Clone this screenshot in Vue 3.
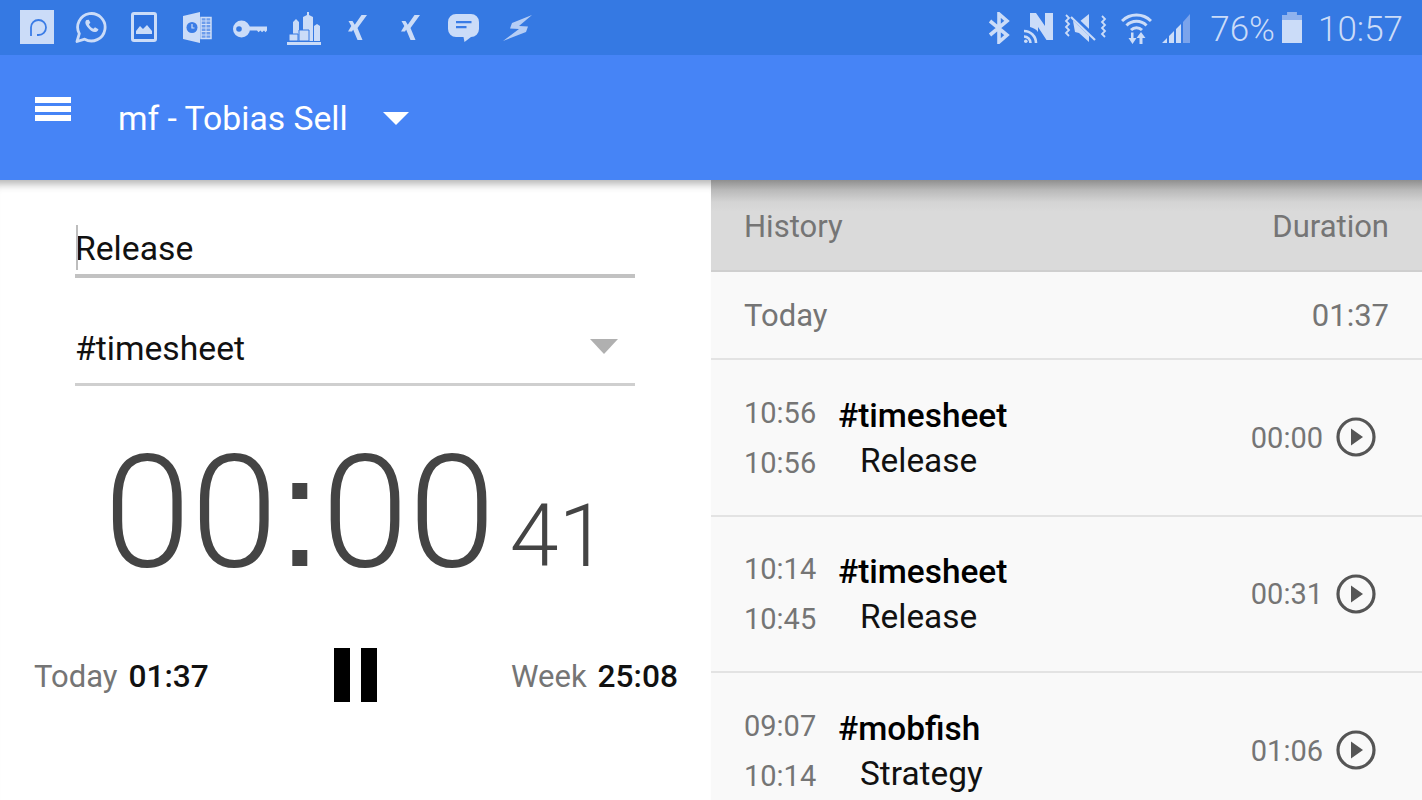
<script setup>
const rows = [
  { from: '10:56', to: '10:56', tag: '#timesheet', task: 'Release', time: '00:00' },
  { from: '10:14', to: '10:45', tag: '#timesheet', task: 'Release', time: '00:31' },
  { from: '09:07', to: '10:14', tag: '#mobfish', task: 'Strategy', time: '01:06' }
]
</script>

<template>
  <div class="screen">
    <div class="statusbar">
      <div class="status_left">
        <svg class="i_p" width="34" height="34" viewBox="0 0 34 34"><rect width="34" height="34" fill="#cbdcf8"/><path d="M11 26V17.500a7.500 7.500 0 1 1 7.500 7.500h-1.500" fill="none" stroke="#3a7ce6" stroke-width="1.800"/></svg>
        <svg class="i_wa" width="32" height="32" viewBox="0 0 32 32"><path d="M2 30.500l2.300-7.800a13.700 13.700 0 1 1 5.400 5.500z" fill="none" stroke="#cbdcf8" stroke-width="2.800" stroke-linejoin="round"/><path d="M11.500 9c-1.600 1.400-1.600 3.800.9 7 2.500 3.200 5.300 5.300 8 5 1.700-.2 2.900-1.400 3-2.800l-3.400-1.900-1.600 1.500c-2-.7-3.700-2.600-4.500-4.500l1.500-1.500L13.800 8.800z" fill="#cbdcf8"/></svg>
        <svg class="i_img" width="26" height="30" viewBox="0 0 26 30"><rect x="1.500" y="1.500" width="23" height="27" rx="1.500" fill="#2f72de" stroke="#cbdcf8" stroke-width="3"/><path d="M5 22v-3l4-5 3 3 2-2 2-2 5 6v3z" fill="#cbdcf8"/></svg>
        <svg class="i_ol" width="29" height="31" viewBox="0 0 29 31"><path d="M0 4L17 0v31L0 27z" fill="#cbdcf8"/><circle cx="9" cy="15.500" r="5.500" fill="#3a7ce6"/><path d="M9 12v4h2.500" fill="none" stroke="#cbdcf8" stroke-width="1.200"/><path d="M18 5.500h10v21H18z" fill="#6c9ceb" stroke="#cbdcf8" stroke-width="1.500"/><path d="M18 9h10M18 12.500h10M18 16h10M18 19.500h10M18 23h10M23 5v22" stroke="#cbdcf8"/></svg>
        <svg class="i_key" width="34" height="18" viewBox="0 0 34 18"><circle cx="8.500" cy="9" r="8.500" fill="#cbdcf8"/><circle cx="6" cy="9" r="2.800" fill="#3579e3"/><path d="M15 6.500h19v4l-1.500 1.800-1.500-1.800-2 1.800-1.500-1.800-2 1.800-1.500-1.800H15z" fill="#cbdcf8"/></svg>
        <svg class="i_city" width="34" height="33" viewBox="0 0 34 33"><path d="M0 33v-3h34v3z" fill="#cbdcf8"/><path d="M6 29V10l3-3 3 3v19zM16 29V5l4-2V0h2v3l4 2v24zM27 29V14l3-2 3 2v15z" fill="#cbdcf8"/><path d="M2 29v-7h9v7zM12 29V18h10v11z" fill="#cbdcf8" stroke="#3579e3"/></svg>
        <svg class="i_x" width="20" height="25" viewBox="0 0 20 25"><path d="M14.500 0H20L10.500 13 15.500 25h-5L5.500 13zM1.500 6h4l3 5-3.500 5.500H1l3.300-5.500z" fill="#cbdcf8"/></svg>
        <svg class="i_x2" width="20" height="25" viewBox="0 0 20 25"><path d="M14.500 0H20L10.500 13 15.500 25h-5L5.500 13zM1.500 6h4l3 5-3.500 5.500H1l3.300-5.500z" fill="#cbdcf8"/></svg>
        <svg class="i_chat" width="31" height="28" viewBox="0 0 31 28"><path d="M8 0h15a8 8 0 0 1 8 8v7a8 8 0 0 1-8 8l-6.500 5-1-5H8a8 8 0 0 1-8-8V8a8 8 0 0 1 8-8z" fill="#cbdcf8"/><path d="M8 7h15.500v2.300H8zM8 12h10.500v2.300H8z" fill="#3a7ce6"/></svg>
        <svg class="i_bolt" width="29" height="26" viewBox="0 0 29 26"><path d="M29 0L9 8 7 13.500l9 .5L0 26l23-9 2-5.500-9-.5z" fill="#cbdcf8" opacity=".85"/></svg>
      </div>
      <div class="status_right">
        <svg class="i_bt" width="22" height="32" viewBox="0 0 22 32"><path d="M2 9l17 14-8 7V2l8 7L2 23" fill="none" stroke="#cbdcf8" stroke-width="3.600"/></svg>
        <svg class="i_n" width="29" height="31" viewBox="0 0 29 31"><path d="M6 1h6l9 13V1h8v27h-6.500L14 15v5c-2-3-5-4-8-5z" fill="#cbdcf8"/><path d="M0 19a12 12 0 0 1 12 12M0 24.500a6.500 6.500 0 0 1 6.500 6.500" fill="none" stroke="#cbdcf8" stroke-width="2.600"/><circle cx="1.800" cy="29.200" r="1.800" fill="#cbdcf8"/></svg>
        <svg class="i_mute" width="43" height="28" viewBox="0 0 43 28"><path d="M9 7l6 1 10-8v28L15 19l-4-1z" fill="#cbdcf8"/><path d="M8 2l24 23" stroke="#3579e3" stroke-width="5"/><path d="M7 3l24 23" stroke="#cbdcf8" stroke-width="2.200"/><path d="M2 1l3 3-3 3 3 3-3 3 3 3-3 3 3 3M38 2l3 3-3 3 3 3-3 3 3 3-3 3 3 3" fill="none" stroke="#cbdcf8" stroke-width="1.800"/></svg>
        <svg class="i_wifi" width="31" height="33" viewBox="0 0 31 33"><path d="M1 10a20.500 20.500 0 0 1 29 0M5.500 14.500a14 14 0 0 1 20 0M10 19a8 8 0 0 1 11 0" fill="none" stroke="#cbdcf8" stroke-width="3"/><path d="M10 21.500h2.500V27H15.500l-4 6-4-6H10zM18.500 33v-6H15.500l4.500-6 4.500 6H21.500v6z" fill="#cbdcf8"/></svg>
        <svg class="i_sig" width="28" height="29" viewBox="0 0 28 29"><path d="M0 29l5-5v5zM7 29V22l5-5v12zM14 29V15l5-5v19z" fill="#cbdcf8"/><path d="M21 29V8l7-8v29z" fill="#7ba4ec"/></svg>
        <span class="pct">76%</span>
        <svg class="i_batt" width="20" height="31" viewBox="0 0 20 31"><path d="M5.500 0h9v3H20v28H0V3h5.500z" fill="#cbdcf8"/><path d="M0 3h20v5H0zM5.500 0h9v3h-9z" fill="#8fb2ee"/></svg>
        <span class="clock">10:57</span>
      </div>
    </div>

    <header class="topbar">
      <div class="burger"><i></i><i></i><i></i></div>
      <span class="account">mf - Tobias Sell</span>
      <span class="caret"></span>
    </header>

    <main class="body">
      <section class="left">
        <div class="field field_task">
          <span class="cursor"></span>
          <span>Release</span>
        </div>
        <div class="field field_tag">
          <span>#timesheet</span>
          <span class="select_arrow"></span>
        </div>
        <div class="timer">
          <span class="timer_main">00<span class="colon">:</span>00</span>
          <span class="timer_sec">41</span>
        </div>
        <div class="totals">
          <div><span class="lbl">Today</span><b>01:37</b></div>
          <div class="pause"><i></i><i></i></div>
          <div><span class="lbl">Week</span><b>25:08</b></div>
        </div>
      </section>

      <section class="right">
        <div class="hist_head">
          <span>History</span>
          <span>Duration</span>
        </div>
        <div class="today">
          <span>Today</span>
          <span>01:37</span>
        </div>
        <div v-for="r in rows" :key="r.from" class="row">
          <div class="times">
            <span>{{ r.from }}</span>
            <span>{{ r.to }}</span>
          </div>
          <div class="info">
            <b>{{ r.tag }}</b>
            <span>{{ r.task }}</span>
          </div>
          <span class="dur">{{ r.time }}</span>
          <svg class="play" width="40" height="40" viewBox="0 0 40 40">
            <circle cx="20" cy="20" r="18" fill="none" stroke="#555" stroke-width="3.200"/>
            <path d="M15 11.500L27 20l-12 8.500z" fill="#555"/>
          </svg>
        </div>
      </section>
    </main>
  </div>
</template>

<style>
html,
body {
  margin: 0;
  overflow: hidden;
}
</style>

<style scoped>
.screen {
  width: 1422px;
  height: 800px;
  overflow: hidden;
  font-family: Roboto, sans-serif;
  background: #fff;
}

.statusbar {
  height: 55px;
  background: #3579e3;
  display: flex;
  justify-content: space-between;
  align-items: center;
  color: #cbdcf8;
}

.status_left {
  display: flex;
  align-items: center;
  padding-left: 20px;
}

.i_p { margin: -1px 21px 0 0; }
.i_wa { margin: -1px 24px 0 0; }
.i_img { margin: -1px 26px 0 0; }
.i_ol { margin: -1px 21px 0 0; }
.i_key { margin: 2px 20px 0 0; }
.i_city { margin: 2px 26px 0 0; }
.i_x { margin: 0 33px 0 0; }
.i_x2 { margin: 0 28px 0 0; }
.i_chat { margin: 1px 24px 0 0; }
.i_bolt { margin: 1px 0 0 0; filter: blur(0.6px); }

.status_right {
  display: flex;
  align-items: center;
  padding-right: 19px;
}

.i_bt { margin: 0 14px 0 0; }
.i_n { margin: 0 11px 0 0; }
.i_mute { margin: 0 14px 0 0; }
.i_wifi { margin: 0 10px 0 0; }
.i_sig { margin: 1px 20px 0 0; }
.i_batt { margin: 0 16px 0 7px; }

.pct,
.clock {
  font-size: 35px;
  font-weight: 300;
  line-height: 55px;
  margin-top: 4px;
}

.topbar {
  height: 125px;
  background: #4684f6;
  position: relative;
  z-index: 2;
  display: flex;
  align-items: flex-start;
  color: #fff;
}

.burger {
  width: 36px;
  margin: 42px 0 0 35px;
  display: flex;
  flex-direction: column;
  gap: 3px;
}

.burger i {
  height: 6px;
  background: #fff;
}

.account {
  font-size: 33.700px;
  font-weight: 400;
  line-height: 40px;
  margin: 44px 0 0 47px;
}

.caret {
  margin: 57px 0 0 35px;
  width: 0;
  height: 0;
  border-left: 13px solid transparent;
  border-right: 13px solid transparent;
  border-top: 13px solid #fff;
}

.body {
  display: flex;
  height: 620px;
}

.left {
  width: 711px;
  position: relative;
  box-shadow: inset 0 12px 8px -8px rgba(0, 0, 0, 0.3);
  padding-top: 45px;
  box-sizing: border-box;
}

.field {
  width: 560px;
  margin-left: 75px;
  font-size: 33.700px;
  color: #111;
  display: flex;
  align-items: center;
  position: relative;
  line-height: 40px;
}

.field_task {
  height: 53px;
  padding-bottom: 2px;
  box-sizing: border-box;
  border-bottom: 4px solid #c2c2c2;
}

.cursor {
  position: absolute;
  left: 1px;
  top: 0;
  width: 2px;
  height: 45px;
  background: #bdbdbd;
}

.field_tag {
  margin-top: 48px;
  height: 60px;
  box-sizing: border-box;
  border-bottom: 3px solid #cfcfcf;
  justify-content: space-between;
  padding-bottom: 12px;
}

.select_arrow {
  width: 0;
  height: 0;
  margin: -4px 17px 0 0;
  border-left: 14px solid transparent;
  border-right: 14px solid transparent;
  border-top: 15px solid #b0b0b0;
}

.timer {
  display: flex;
  justify-content: center;
  align-items: baseline;
  color: #444;
  font-weight: 300;
  line-height: 150px;
  margin-top: 51px;
}

.timer_main {
  font-size: 157px;
}

.colon {
  font-family: "Liberation Sans", sans-serif;
  font-weight: 400;
}

.timer_sec {
  font-size: 88px;
  margin-left: 14px;
}

.totals {
  display: flex;
  justify-content: space-between;
  align-items: center;
  padding: 0 33px 0 34px;
  margin-top: 37px;
  font-size: 31px;
  color: #111;
}

.totals b {
  font-size: 31.700px;
  font-weight: 500;
  margin-left: 11px;
}

.lbl {
  color: #757575;
}

.pause {
  display: flex;
  gap: 11px;
  margin: 0 9px 2px 0;
}

.pause i {
  width: 16px;
  height: 54px;
  background: #000;
}

.right {
  width: 711px;
  background: #f9f9f9;
  color: #757575;
  font-size: 31px;
}

.hist_head {
  height: 92px;
  padding: 0 33px 23px;
  box-sizing: border-box;
  background: linear-gradient(#8f8f8f 0, #b9b9b9 10px, #d4d4d4 22px, #dadada 32px);
  border-bottom: 2px solid #cfcfcf;
  display: flex;
  justify-content: space-between;
  align-items: flex-end;
  line-height: 40px;
}

.today {
  height: 88px;
  box-sizing: border-box;
  padding: 0 33px;
  display: flex;
  justify-content: space-between;
  align-items: center;
  border-bottom: 2px solid #e3e3e3;
}

.row {
  height: 156.500px;
  box-sizing: border-box;
  padding: 1px 46px 0 33px;
  display: flex;
  align-items: center;
  border-bottom: 2px solid #e3e3e3;
}

.times {
  display: flex;
  flex-direction: column;
  gap: 10px;
  line-height: 40px;
  font-size: 29px;
  width: 94px;
  flex-shrink: 0;
}

.info {
  flex: 1;
  display: flex;
  flex-direction: column;
  color: #111;
  line-height: 45px;
  font-size: 33.400px;
}

.info b {
  font-weight: 500;
  color: #000;
}

.info span {
  margin-left: 22px;
}

.dur {
  font-size: 29px;
  margin-right: 13px;
}

.play {
  margin-top: -1px;
}
</style>
